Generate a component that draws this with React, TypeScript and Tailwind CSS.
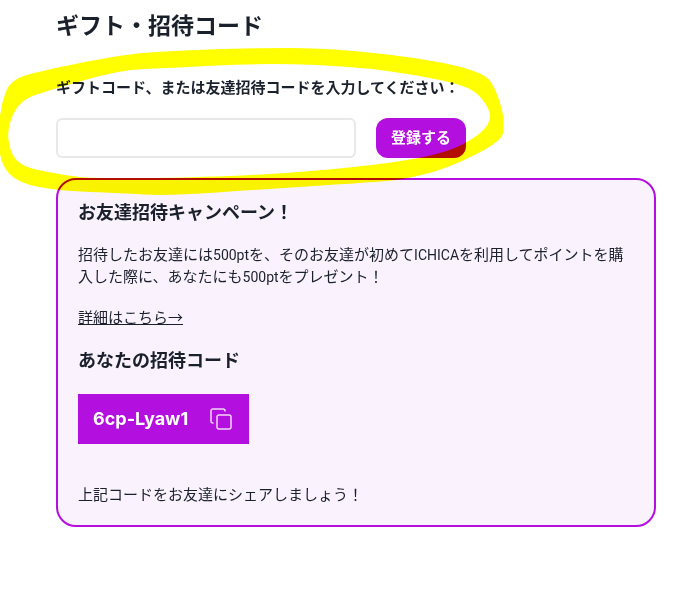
import React from 'react';
import { Copy } from 'lucide-react';

const font = "font-['Inter','Noto_Sans_CJK_JP',sans-serif]";
const latin = "font-['Roboto'] text-sm";

// outlines of the marker stroke, traced from the screenshot
const outer: number[][] = [
  [-2, 135], [1, 105], [10, 80], [40, 71], [120, 55], [167, 51], [250, 48], [333, 48], [433, 60], [485, 73], [496, 90], [503, 113], [504, 125],
  [502, 141], [449, 168], [402, 180], [360, 183], [267, 189], [167, 196], [120, 193], [60, 191], [18, 183], [1, 165],
];
const inner: number[][] = [
  [7, 127], [10, 153], [23, 167], [53, 173], [83, 178], [120, 178], [167, 178], [267, 175], [367, 166], [428, 157], [465, 145], [494, 122],
  [483, 97], [460, 83], [367, 67], [267, 63], [167, 68], [120, 70], [50, 90], [20, 100],
];

const smooth = (pts: number[][]) => {
  const mid = (a: number[], b: number[]) => `${(a[0] + b[0]) / 2} ${(a[1] + b[1]) / 2}`;
  let d = `M${mid(pts[pts.length - 1], pts[0])}`;
  pts.forEach((p, i) => {
    d += ` Q${p[0]} ${p[1]} ${mid(p, pts[(i + 1) % pts.length])}`;
  });
  return d + ' Z';
};

const App: React.FC = () => {
  return (
    <div className={`relative h-[592px] w-[689px] overflow-hidden bg-white text-[#1a202c] ${font}`}>
      <div className="ml-14 w-[600px]">
        <h1 className="pt-[9px] text-[23px] leading-[34px] font-bold">ギフト・招待コード</h1>

        <p className="mt-[34px] text-[15px] leading-[22px] font-bold">ギフトコード、または友達招待コードを入力してください：</p>

        <div className="mt-[19px] flex items-center gap-5">
          <input type="text" className="h-10 w-[300px] rounded-md border-2 border-[#e8e8e8] bg-white" />
          <button className="h-10 w-[90px] rounded-xl bg-[#b30fde] text-[15px] font-bold text-white">登録する</button>
        </div>

        <div className="mt-5 h-[349px] rounded-[20px] border-2 border-[#b30fde] bg-[#faf3fe] px-5 pt-[21px]">
          <h2 className="text-lg leading-6 font-bold">お友達招待キャンペーン！</h2>
          <p className="mt-[19px] text-[15px] leading-[22px]">
            招待したお友達には<span className={latin}>500pt</span>を、そのお友達が初めて<span className={latin}>ICHICA</span>を利用してポイントを購入した際に、あなたにも<span className={latin}>500pt</span>をプレゼント！
          </p>
          <p className="mt-[18px] text-[15px] leading-[22px]">
            <a className="underline">詳細はこちら<span className="font-['Noto_Sans_CJK_JP']">→</span></a>
          </p>
          <h2 className="mt-[20px] text-lg leading-6 font-bold">あなたの招待コード</h2>
          <div className="mt-[21px] flex h-[50px] w-[171px] items-center bg-[#b30fde] pl-[15px] text-white">
            <span className="text-lg font-bold">6cp-Lyaw1</span>
            <Copy className="ml-[21px] h-6 w-6 text-[#f3d6fa]" strokeWidth={1.5} />
          </div>
          <p className="mt-[40px] text-[15px] leading-[22px]">上記コードをお友達にシェアしましょう！</p>
        </div>
      </div>

      {/* yellow marker scribble over the page, red where it crosses purple */}
      <svg className="absolute top-0 left-0 mix-blend-multiply" width="689" height="592" viewBox="0 0 689 592">
        <path fill="#ffff00" fillRule="evenodd" d={`${smooth(outer)} ${smooth(inner)}`} />
      </svg>
    </div>
  );
};

export default App;
